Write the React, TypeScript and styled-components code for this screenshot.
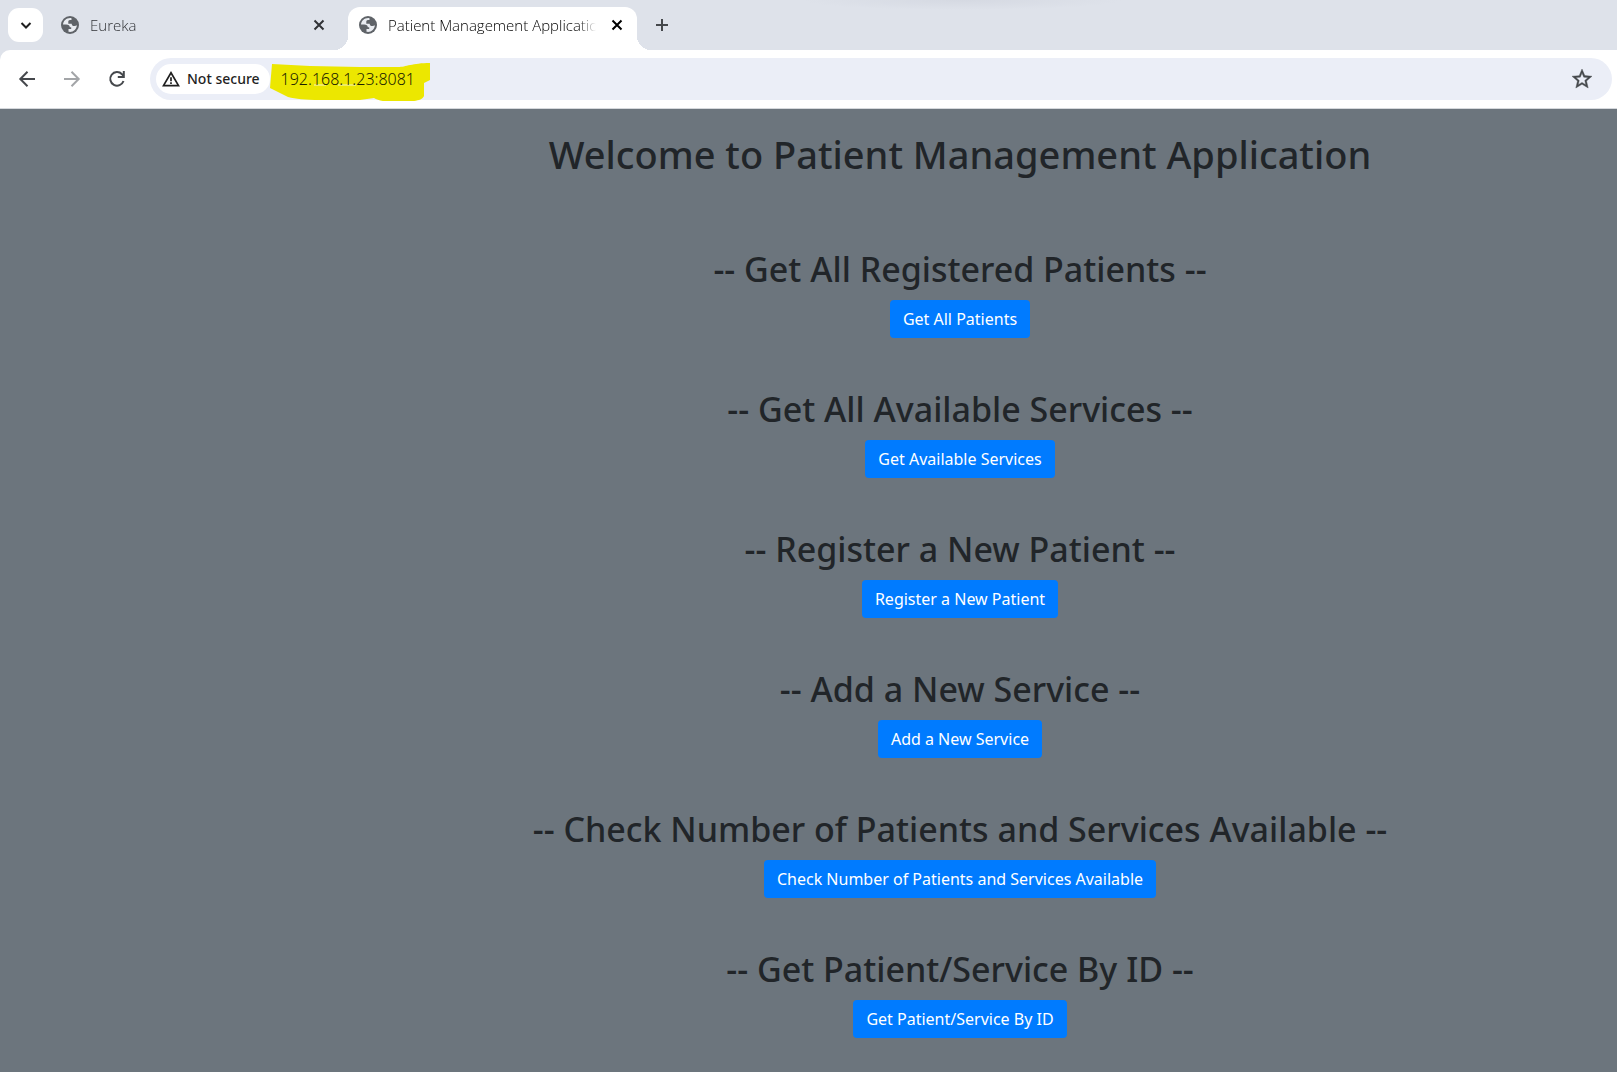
import React from "react";
import styled, { createGlobalStyle } from "styled-components";

const GlobalStyle = createGlobalStyle`
  *, *::before, *::after { box-sizing: border-box; }
  body {
    margin: 0;
    background: #6c757d;
    color: #212529;
    font-family: "Noto Sans", sans-serif;
  }
  button, input { font: inherit; color: inherit; }
`;

const IconButton = styled.button<{ $size?: number; $color?: string }>`
  display: flex;
  align-items: center;
  justify-content: center;
  flex: none;
  width: ${(p) => p.$size ?? 34}px;
  height: ${(p) => p.$size ?? 34}px;
  padding: 0;
  border: 0;
  border-radius: 50%;
  background: transparent;
  color: ${(p) => p.$color ?? "#45484c"};
`;

const TabStrip = styled.div`
  display: flex;
  align-items: flex-end;
  height: 50px;
  padding-left: 8px;
  background:
    radial-gradient(ellipse 160px 10px at 962px 0, #d5d9e2, #dee2ea00),
    #dee2ea;
`;

const TabSearch = styled.button`
  display: flex;
  align-items: center;
  justify-content: center;
  width: 35px;
  height: 34px;
  margin-bottom: 8px;
  padding: 0;
  border: 0;
  border-radius: 11px;
  background: #fff;
  color: #1f1f1f;
`;

const Tab = styled.div<{ $active?: boolean }>`
  position: relative;
  display: flex;
  align-items: center;
  width: 289px;
  height: 43px;
  padding: 0 8px 8px 11px;
  border-radius: 12px 12px 0 0;
  background: ${(p) => (p.$active ? "#fff" : "transparent")};
  color: ${(p) => (p.$active ? "#000" : "#303236")};
  margin-left: ${(p) => (p.$active ? 9 : 7)}px;

  &::before, &::after {
    content: "";
    display: ${(p) => (p.$active ? "block" : "none")};
    position: absolute;
    bottom: 0;
    width: 14px;
    height: 14px;
  }
  &::before {
    right: 100%;
    background: radial-gradient(circle at 0 0, transparent 14px, #fff 14px);
  }
  &::after {
    left: 100%;
    background: radial-gradient(circle at 100% 0, transparent 14px, #fff 14px);
  }
`;

const TabTitle = styled.span`
  flex: 1;
  min-width: 0;
  margin: 0 9px 0 11px;
  overflow: hidden;
  white-space: nowrap;
  font-family: "Open Sans", sans-serif;
  font-size: 15px;
  font-weight: 300;
  line-height: 20px;
  mask-image: linear-gradient(to left, transparent, #000 18px);
`;

const NewTab = styled(IconButton)`
  margin: 0 0 8px 8px;
`;

const Toolbar = styled.div`
  background: #dee2ea;
`;

const ToolbarInner = styled.div`
  display: flex;
  align-items: center;
  gap: 11px;
  height: 59px;
  padding: 0 5px 0 10px;
  border-bottom: 1px solid #d5d8dc;
  border-top-left-radius: 10px;
  background: #fff;
`;

const AddressBar = styled.div`
  display: flex;
  align-items: center;
  flex: 1;
  height: 42px;
  margin-left: 5px;
  padding: 0 13px 0 6px;
  border-radius: 21px;
  background: #ebeef7;
`;

const SecurityChip = styled.button`
  display: flex;
  align-items: center;
  gap: 7px;
  height: 30px;
  padding: 0 10px 0 6px;
  border: 0;
  border-radius: 15px;
  background: #fff;
  color: #1f1f1f;
  font-size: 14px;
  font-weight: 500;
  line-height: 20px;
  white-space: nowrap;
`;

const UrlField = styled.div`
  position: relative;
  display: flex;
  flex: 1;
`;

const Marker = styled.svg`
  position: absolute;
  left: 0;
  top: -4px;
`;

const UrlInput = styled.input`
  position: relative;
  flex: 1;
  min-width: 0;
  height: 32px;
  padding: 0 0 0 11px;
  border: 0;
  outline: 0;
  background: transparent;
  color: #1c1e00;
  font-size: 16px;
  font-weight: 300;
`;

const Page = styled.main`
  display: flex;
  flex-direction: column;
  align-items: center;
  padding: 19px 0 32px 303px;
  text-align: center;
`;

const Title = styled.h1`
  margin: 0 0 68px;
  font-size: 38px;
  font-weight: 500;
  line-height: 52px;
`;

const Section = styled.section`
  display: flex;
  flex-direction: column;
  align-items: center;
  gap: 10px;
  margin-bottom: 50px;
`;

const Heading = styled.h2`
  margin: 0;
  font-size: 34px;
  font-weight: 500;
  line-height: 42px;
`;

const PrimaryButton = styled.button`
  height: 38px;
  padding: 0 13px;
  border: 0;
  border-radius: 4px;
  background: #007bff;
  color: #fff;
  font-size: 16px;
  line-height: 24px;
`;

const Stroke = ({ size, width = 2, d }: { size: number; width?: number; d: string }) => (
  <svg width={size} height={size} viewBox={`0 0 ${size} ${size}`} fill="none" stroke="currentColor" strokeWidth={width} aria-hidden>
    <path d={d} />
  </svg>
);

const Globe = () => (
  <svg width="18" height="18" viewBox="0 0 18 18" aria-hidden>
    <circle cx="9" cy="9" r="9" fill="#5f6368" />
    <path
      fill="#e9ecf1"
      d="M10.500 2.200C6 1.500 2.300 4.600 2 8.600h3.200c2.200 0 3.600.9 3.600 2.700h1.400v1.600H7.500v2.900c4.400.9 8.100-2.300 8.400-6.500-.7.500-1.500.7-2.400.7-1.900 0-2.800-.9-2.800-2.300H7.300V5.400c0-1.100 1-1.500 3.200-1.500z"
    />
  </svg>
);

const Warning = () => (
  <svg width="18" height="16" viewBox="0 0 18 16" fill="none" stroke="currentColor" strokeWidth="1.700" aria-hidden>
    <path d="M9 1.800 1.500 14.600h15z" />
    <path d="M9 6.200v4M9 11.200v1.700" />
  </svg>
);

const Reload = () => (
  <svg width="20" height="20" viewBox="0 0 20 20" aria-hidden>
    <path d="M16.500 12A6.800 6.800 0 1 1 15 5.200L16.500 7" fill="none" stroke="currentColor" strokeWidth="2" />
    <path d="M17.800 2v7h-7V7h5V2z" fill="currentColor" />
  </svg>
);

const Star = () => (
  <svg width="24" height="24" viewBox="0 0 24 24" aria-hidden>
    <path
      fill="currentColor"
      stroke="currentColor"
      strokeWidth="0.400"
      d="M22 9.240l-7.190-.62L12 2 9.190 8.630 2 9.240l5.460 4.730L5.820 21 12 17.270 18.180 21l-1.630-7.030L22 9.240zM12 15.400l-3.760 2.270 1-4.280-3.320-2.880 4.380-.38L12 6.100l1.710 4.040 4.380.38-3.320 2.880 1 4.280L12 15.400z"
    />
  </svg>
);

const CLOSE = "M1.500 1.500 10.500 10.500M10.500 1.500 1.500 10.500";

const sections = [
  { heading: "Get All Registered Patients", action: "Get All Patients" },
  { heading: "Get All Available Services", action: "Get Available Services" },
  { heading: "Register a New Patient", action: "Register a New Patient" },
  { heading: "Add a New Service", action: "Add a New Service" },
  {
    heading: "Check Number of Patients and Services Available",
    action: "Check Number of Patients and Services Available",
  },
  { heading: "Get Patient/Service By ID", action: "Get Patient/Service By ID" },
];

const tabs = [
  { title: "Eureka", active: false },
  { title: "Patient Management Application", active: true },
];

export default function App() {
  return (
    <>
      <GlobalStyle />
      <header>
        <TabStrip>
          <TabSearch aria-label="Search tabs">
            <Stroke size={12} d="M1.500 4 6 8.500 10.500 4" />
          </TabSearch>
          {tabs.map((tab) => (
            <Tab key={tab.title} $active={tab.active}>
              <Globe />
              <TabTitle>{tab.title}</TabTitle>
              <IconButton $size={24} $color="inherit" aria-label={`Close ${tab.title}`}>
                <Stroke size={12} d={CLOSE} />
              </IconButton>
            </Tab>
          ))}
          <NewTab aria-label="New tab">
            <Stroke size={14} d="M7 1v12M1 7h12" />
          </NewTab>
        </TabStrip>
        <Toolbar>
          <ToolbarInner>
            <IconButton aria-label="Back">
              <Stroke size={18} d="M17 9H3M9.500 1.800 2.300 9l7.200 7.200" />
            </IconButton>
            <IconButton $color="#a3a5a8" aria-label="Forward">
              <Stroke size={18} d="M1 9h14M8.500 1.800 15.700 9l-7.200 7.200" />
            </IconButton>
            <IconButton aria-label="Reload">
              <Reload />
            </IconButton>
            <AddressBar>
              <SecurityChip>
                <Warning />
                Not secure
              </SecurityChip>
              <UrlField>
                <Marker width="162" height="42" viewBox="0 0 162 42" aria-hidden>
                  <path
                    fill="#ece700"
                    d="M2 5 40 7l50 1h38c8 0 14-4 32-4v17l-6 3v13c-2 5-10 5-20 6-12 0-24 0-30-4l-14 2H50c-16 0-24-1-32-3L0 29z"
                  />
                  <path d="M44 26h12M68 26h18" stroke="#f3f3c8" strokeWidth="1" />
                </Marker>
                <UrlInput aria-label="Address" defaultValue="192.168.1.23:8081" />
              </UrlField>
              <IconButton aria-label="Bookmark this page">
                <Star />
              </IconButton>
            </AddressBar>
          </ToolbarInner>
        </Toolbar>
      </header>
      <Page>
        <Title>Welcome to Patient Management Application</Title>
        {sections.map((s) => (
          <Section key={s.heading}>
            <Heading>-- {s.heading} --</Heading>
            <PrimaryButton>{s.action}</PrimaryButton>
          </Section>
        ))}
      </Page>
    </>
  );
}
